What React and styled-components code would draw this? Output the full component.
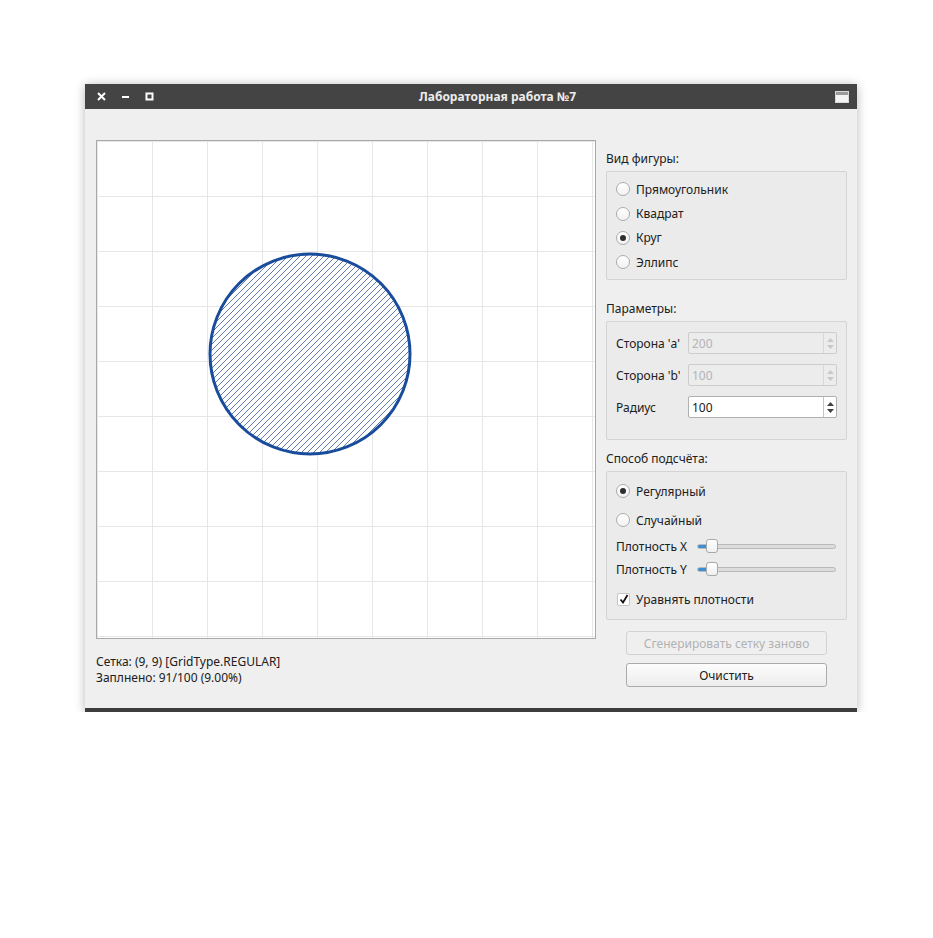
import React from "react";
import styled, { createGlobalStyle } from "styled-components";

const GlobalStyle = createGlobalStyle`
  body {
    margin: 0;
    background: #ffffff;
    font-family: "Noto Sans", "Open Sans", sans-serif;
    font-size: 12px;
    color: #202020;
  }
`;

const Page = styled.div`
  padding: 84px 0 0 85px;
`;

const Window = styled.div`
  width: 772px;
  background: #efefef;
  border-bottom: 4px solid #3d3d3d;
  box-shadow: 0 1px 10px rgba(0, 0, 0, 0.28);
`;

const TitleBar = styled.div`
  height: 25px;
  background: #444444;
  display: flex;
  align-items: center;
`;

const Controls = styled.div`
  width: 75px;
  padding-left: 8px;
  box-sizing: border-box;
  display: flex;
  gap: 8px;
`;

const CtrlButton = styled.span`
  width: 16px;
  height: 16px;
  display: flex;
  align-items: center;
  justify-content: center;
`;

const Title = styled.div`
  flex: 1;
  text-align: center;
  color: #ececec;
  font-weight: bold;
  font-size: 12px;
`;

const AppIcon = styled.span`
  width: 14px;
  height: 12px;
  margin-right: 8px;
  background: linear-gradient(#9a9a9a 0 3px, #f4f4f4 3px);
  border: 1px solid #d8d8d8;
  box-sizing: border-box;
`;

const Body = styled.div`
  height: 599px;
  box-sizing: border-box;
  padding: 31px 10px 0 11px;
  display: flex;
  gap: 10px;
`;

const LeftCol = styled.div`
  width: 500px;
  flex: none;
`;

const Canvas = styled.div`
  width: 500px;
  height: 499px;
  box-sizing: border-box;
  border: 1px solid #a9a9a9;
  background: #ffffff;
  svg {
    display: block;
  }
`;

const Status = styled.div`
  margin-top: 15px;
  line-height: 16px;
`;

const RightCol = styled.div`
  width: 241px;
  flex: none;
  display: flex;
  flex-direction: column;
`;

const GroupLabel = styled.div`
  line-height: 16px;
  margin-top: ${(p) => p.$top}px;
  margin-bottom: 4px;
`;

const GroupBox = styled.div`
  height: ${(p) => p.$h}px;
  box-sizing: border-box;
  border: 1px solid #d4d4d4;
  border-radius: 2px;
  background: #ebebeb;
  padding: ${(p) => p.$pt}px 9px 0 9px;
  display: flex;
  flex-direction: column;
`;

const Row = styled.label`
  display: flex;
  align-items: center;
  height: ${(p) => p.$h || 24}px;
  margin-top: ${(p) => p.$mt || 0}px;
  gap: 6px;
  flex: none;
`;

const RadioCircle = styled.span`
  width: 14px;
  height: 14px;
  box-sizing: border-box;
  border-radius: 50%;
  border: 1px solid #ababab;
  background: linear-gradient(#ffffff, #f2f2f2);
  display: flex;
  align-items: center;
  justify-content: center;
  &::after {
    content: "";
    width: 6px;
    height: 6px;
    border-radius: 50%;
    background: ${(p) => (p.$on ? "#2e2e2e" : "transparent")};
  }
`;

const SpinLabel = styled.span`
  width: 66px;
  flex: none;
`;

const SpinBox = styled.div`
  width: 149px;
  height: 22px;
  box-sizing: border-box;
  border: 1px solid ${(p) => (p.$disabled ? "#cdcdcd" : "#b0b0b0")};
  border-radius: 2px;
  background: ${(p) => (p.$disabled ? "#ececec" : "#ffffff")};
  color: ${(p) => (p.$disabled ? "#b4b4b4" : "#202020")};
  display: flex;
  align-items: center;
`;

const SpinValue = styled.span`
  flex: 1;
  padding-left: 3px;
`;

const SpinArrows = styled.span`
  width: 13px;
  height: 100%;
  box-sizing: border-box;
  border-left: 1px solid ${(p) => (p.$disabled ? "#d8d8d8" : "#c4c4c4")};
  display: flex;
  flex-direction: column;
  align-items: center;
  justify-content: center;
  gap: 3px;
`;

const SliderLabel = styled.span`
  width: 75px;
  flex: none;
`;

const Slider = styled.div`
  position: relative;
  width: 139px;
  height: 16px;
  display: flex;
  align-items: center;
`;

const Groove = styled.div`
  width: 100%;
  height: 5px;
  box-sizing: border-box;
  border: 1px solid #b9b9b9;
  border-radius: 3px;
  background: linear-gradient(90deg, #3d8fd5 0 12px, #dcdcdc 12px);
`;

const Handle = styled.div`
  position: absolute;
  left: 9px;
  top: 1px;
  width: 12px;
  height: 14px;
  box-sizing: border-box;
  border: 1px solid #a9a9a9;
  border-radius: 3px;
  background: linear-gradient(#ffffff, #f0f0f0);
`;

const CheckBox = styled.span`
  width: 13px;
  height: 13px;
  margin-left: 1px;
  box-sizing: border-box;
  border: 1px solid #c4c4c4;
  border-radius: 2px;
  background: #ffffff;
  display: flex;
  align-items: center;
  justify-content: center;
`;

const Button = styled.button`
  width: 201px;
  height: 24px;
  margin: ${(p) => p.$mt}px 0 0 20px;
  box-sizing: border-box;
  border: 1px solid ${(p) => (p.disabled ? "#d2d2d2" : "#ababab")};
  border-radius: 3px;
  background: ${(p) =>
    p.disabled ? "#efefef" : "linear-gradient(#fdfdfd, #ececec)"};
  color: ${(p) => (p.disabled ? "#b2b2b2" : "#202020")};
  font-family: inherit;
  font-size: 12px;
  padding: 0;
`;

const Arrows = ({ disabled }) => {
  const c = disabled ? "#c8c8c8" : "#404040";
  return (
    <SpinArrows $disabled={disabled}>
      <svg width="7" height="4" viewBox="0 0 7 4">
        <path d="M0 4 L3.5 0 L7 4 Z" fill={c} />
      </svg>
      <svg width="7" height="4" viewBox="0 0 7 4">
        <path d="M0 0 L3.5 4 L7 0 Z" fill={c} />
      </svg>
    </SpinArrows>
  );
};

const Drawing = () => {
  const lines = [];
  for (let i = 0; i <= 9; i++) {
    const p = i * 55 + 0.5;
    lines.push(<line key={"v" + i} x1={p} y1="0" x2={p} y2="497" />);
    lines.push(<line key={"h" + i} x1="0" y1={p} x2="498" y2={p} />);
  }
  return (
    <svg width="498" height="497" viewBox="0 0 498 497">
      <defs>
        <pattern id="hatch" width="6" height="6" patternUnits="userSpaceOnUse">
          <path
            d="M0 6 L6 0 M-1 1 L1 -1 M5 7 L7 5"
            stroke="#1e4289"
            strokeWidth="0.7"
          />
        </pattern>
      </defs>
      <g stroke="#e6e6e6" strokeWidth="1">{lines}</g>
      <circle cx="213" cy="213" r="100" fill="#ffffff" />
      <circle
        cx="213"
        cy="213"
        r="100"
        fill="url(#hatch)"
        stroke="#1a4c9c"
        strokeWidth="3"
      />
    </svg>
  );
};

export default function App() {
  return (
    <Page>
      <GlobalStyle />
      <Window>
        <TitleBar>
          <Controls>
            <CtrlButton>
              <svg width="9" height="9" viewBox="0 0 9 9">
                <path d="M1 1 L8 8 M8 1 L1 8" stroke="#fff" strokeWidth="2" />
              </svg>
            </CtrlButton>
            <CtrlButton>
              <svg width="9" height="9" viewBox="0 0 9 9">
                <path d="M1 5 L8 5" stroke="#fff" strokeWidth="2" />
              </svg>
            </CtrlButton>
            <CtrlButton>
              <svg width="9" height="9" viewBox="0 0 9 9">
                <rect x="1.5" y="1.5" width="6" height="6" fill="none" stroke="#fff" strokeWidth="2" />
              </svg>
            </CtrlButton>
          </Controls>
          <Title>Лабораторная работа №7</Title>
          <AppIcon />
        </TitleBar>
        <Body>
          <LeftCol>
            <Canvas>
              <Drawing />
            </Canvas>
            <Status>
              Сетка: (9, 9) [GridType.REGULAR]
              <br />
              Заплнено: 91/100 (9.00%)
            </Status>
          </LeftCol>
          <RightCol>
            <GroupLabel $top={11}>Вид фигуры:</GroupLabel>
            <GroupBox $h={109} $pt={5}>
              <Row $h={24.4}>
                <RadioCircle />
                Прямоугольник
              </Row>
              <Row $h={24.4}>
                <RadioCircle />
                Квадрат
              </Row>
              <Row $h={24.4}>
                <RadioCircle $on />
                Круг
              </Row>
              <Row $h={24.4}>
                <RadioCircle />
                Эллипс
              </Row>
            </GroupBox>

            <GroupLabel $top={21}>Параметры:</GroupLabel>
            <GroupBox $h={119} $pt={10}>
              <Row $h={22} $mt={0}>
                <SpinLabel>Сторона 'a'</SpinLabel>
                <SpinBox $disabled>
                  <SpinValue>200</SpinValue>
                  <Arrows disabled />
                </SpinBox>
              </Row>
              <Row $h={22} $mt={10}>
                <SpinLabel>Сторона 'b'</SpinLabel>
                <SpinBox $disabled>
                  <SpinValue>100</SpinValue>
                  <Arrows disabled />
                </SpinBox>
              </Row>
              <Row $h={22} $mt={10}>
                <SpinLabel>Радиус</SpinLabel>
                <SpinBox>
                  <SpinValue>100</SpinValue>
                  <Arrows />
                </SpinBox>
              </Row>
            </GroupBox>

            <GroupLabel $top={11}>Способ подсчёта:</GroupLabel>
            <GroupBox $h={149} $pt={7}>
              <Row>
                <RadioCircle $on />
                Регулярный
              </Row>
              <Row $mt={5}>
                <RadioCircle />
                Случайный
              </Row>
              <Row $h={20} $mt={4} as="div">
                <SliderLabel>Плотность X</SliderLabel>
                <Slider>
                  <Groove />
                  <Handle />
                </Slider>
              </Row>
              <Row $h={20} $mt={3} as="div">
                <SliderLabel>Плотность Y</SliderLabel>
                <Slider>
                  <Groove />
                  <Handle />
                </Slider>
              </Row>
              <Row $mt={8}>
                <CheckBox>
                  <svg width="10" height="10" viewBox="0 0 10 10">
                    <path d="M1.5 5.5 L4 8.5 L8.5 1" fill="none" stroke="#111" strokeWidth="1.8" />
                  </svg>
                </CheckBox>
                Уравнять плотности
              </Row>
            </GroupBox>

            <Button disabled $mt={11}>
              Сгенерировать сетку заново
            </Button>
            <Button $mt={8}>Очистить</Button>
          </RightCol>
        </Body>
      </Window>
    </Page>
  );
}
